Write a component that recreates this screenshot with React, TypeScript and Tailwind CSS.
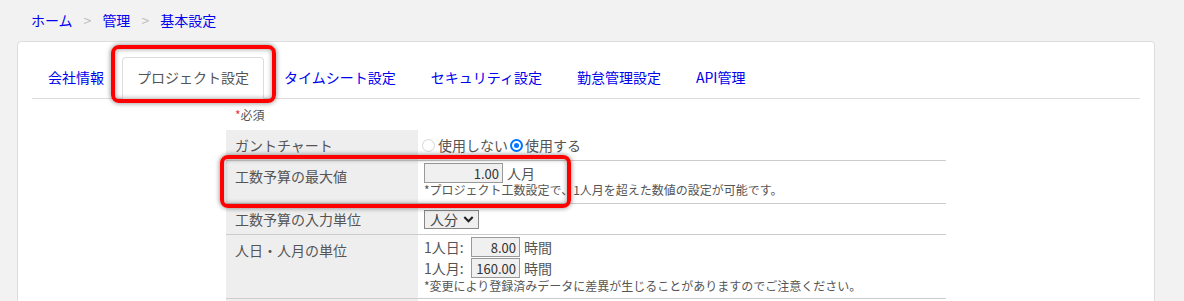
import React from "react";

const tabs = [
  { label: "会社情報", active: false },
  { label: "プロジェクト設定", active: true },
  { label: "タイムシート設定", active: false },
  { label: "セキュリティ設定", active: false },
  { label: "勤怠管理設定", active: false },
  { label: "API管理", active: false },
];

const Row = ({ label, h, children }: { label: string; h: string; children?: React.ReactNode }) => (
  <div className={`grid grid-cols-[192px_1fr] border-b border-[#ccc] ${h}`}>
    <div className="bg-[#eee] pl-[9px] pt-[5px] text-[14px] leading-[20px] text-[#555]">{label}</div>
    <div className="pl-[6px] text-[14px] leading-[20px] text-[#555]">{children}</div>
  </div>
);

const NumBox = ({ value, w }: { value: string; w: string }) => (
  <input
    readOnly
    value={value}
    className={`${w} h-[20px] border border-[#999] bg-[#f0f0f0] pr-[3px] text-right text-[13px] leading-[18px] text-[#333] outline-none`}
  />
);

export default function App() {
  return (
    <div
      className="relative min-h-[301px] overflow-hidden bg-[#f2f2f2]"
      style={{ fontFamily: "'Noto Sans CJK JP', 'Noto Sans', sans-serif" }}
    >
      {/* breadcrumb */}
      <div className="flex h-[41px] items-start pl-[31px] pt-[10px] text-[14px] leading-[20px]">
        <a className="text-[#0000ee]">ホーム</a>
        <span className="mx-[11px] text-[#bbb]">&gt;</span>
        <a className="text-[#0000ee]">管理</a>
        <span className="mx-[11px] text-[#bbb]">&gt;</span>
        <a className="text-[#0000ee]">基本設定</a>
      </div>

      {/* card */}
      <div className="ml-[17px] min-h-[300px] w-[1138px] rounded-[4px] border border-[#ddd] bg-white px-[14px] pt-[15px]">
        <ul className="flex border-b border-[#ddd] pl-[1px]">
          {tabs.map((t, i) => (
            <li
              key={t.label}
              className={`-mb-[1px] h-[42px] rounded-t-[4px] border px-[14px] text-[14px] leading-[39px] ${
                i === 0 ? "mr-[3px]" : "mr-[5px]"
              } ${t.active ? "border-[#ddd] border-b-white bg-white text-[#555]" : "border-transparent text-[#0000ee]"}`}
            >
              {t.label}
            </li>
          ))}
        </ul>

        <div className="mx-auto w-[720px] pt-[8px]">
          <div className="mb-[7px] pl-[9px] text-[12px] leading-[16px] text-[#555]">
            <span className="text-[#e33]">*</span>必須
          </div>

          <Row label="ガントチャート" h="h-[31px]">
            <div className="-ml-[2px] flex h-full items-center">
              <span className="h-[13px] w-[13px] rounded-full border border-[#d6d6d6] bg-white" />
              <span className="ml-[3px]">使用しない</span>
              <span className="ml-[2px] flex h-[13px] w-[13px] items-center justify-center rounded-full border-2 border-[#0075ff] bg-white">
                <span className="h-[5px] w-[5px] rounded-full bg-[#0075ff]" />
              </span>
              <span className="ml-[2px]">使用する</span>
            </div>
          </Row>

          <Row label="工数予算の最大値" h="h-[43px]">
            <div className="flex items-center pt-[2px]">
              <NumBox value="1.00" w="w-[79px]" />
              <span className="ml-[4px]">人月</span>
            </div>
            <div className="text-[12px] leading-[14px]">*プロジェクト工数設定で、1人月を超えた数値の設定が可能です。</div>
          </Row>

          <Row label="工数予算の入力単位" h="h-[31px]">
            <div className="flex h-full items-center">
              <div className="flex h-[19px] w-[55px] items-center border border-[#888] bg-[#efefef] pl-[5px] text-[14px] leading-[17px] text-[#444]">
                人分
                <svg viewBox="0 0 12 8" className="ml-[5px] h-[7px] w-[11px]">
                  <path d="M1.2 1.2 L6 6 L10.8 1.2" fill="none" stroke="#222" strokeWidth="2.4" />
                </svg>
              </div>
            </div>
          </Row>

          <Row label="人日・人月の単位" h="h-[64px]">
            <div className="flex items-center pt-[2px]">
              <span className="w-[47px]">1人日:</span>
              <NumBox value="8.00" w="w-[49px]" />
              <span className="ml-[4px]">時間</span>
            </div>
            <div className="mt-[1px] flex items-center">
              <span className="w-[47px]">1人月:</span>
              <NumBox value="160.00" w="w-[49px]" />
              <span className="ml-[4px]">時間</span>
            </div>
            <div className="text-[12px] leading-[16px]">*変更により登録済みデータに差異が生じることがありますのでご注意ください。</div>
          </Row>

          <Row label="" h="h-[40px]" />
        </div>
      </div>

      {/* red annotation boxes */}
      <div className="absolute left-[111px] top-[45px] h-[58px] w-[165px] rounded-[8px] border-4 border-[#ff0000] shadow-[0_0_4px_1px_rgba(0,0,0,0.35),inset_0_0_4px_1px_rgba(0,0,0,0.3)]" />
      <div className="absolute left-[220px] top-[155px] h-[53px] w-[351px] rounded-[8px] border-4 border-[#ff0000] shadow-[0_0_4px_1px_rgba(0,0,0,0.35),inset_0_0_4px_1px_rgba(0,0,0,0.3)]" />
    </div>
  );
}
